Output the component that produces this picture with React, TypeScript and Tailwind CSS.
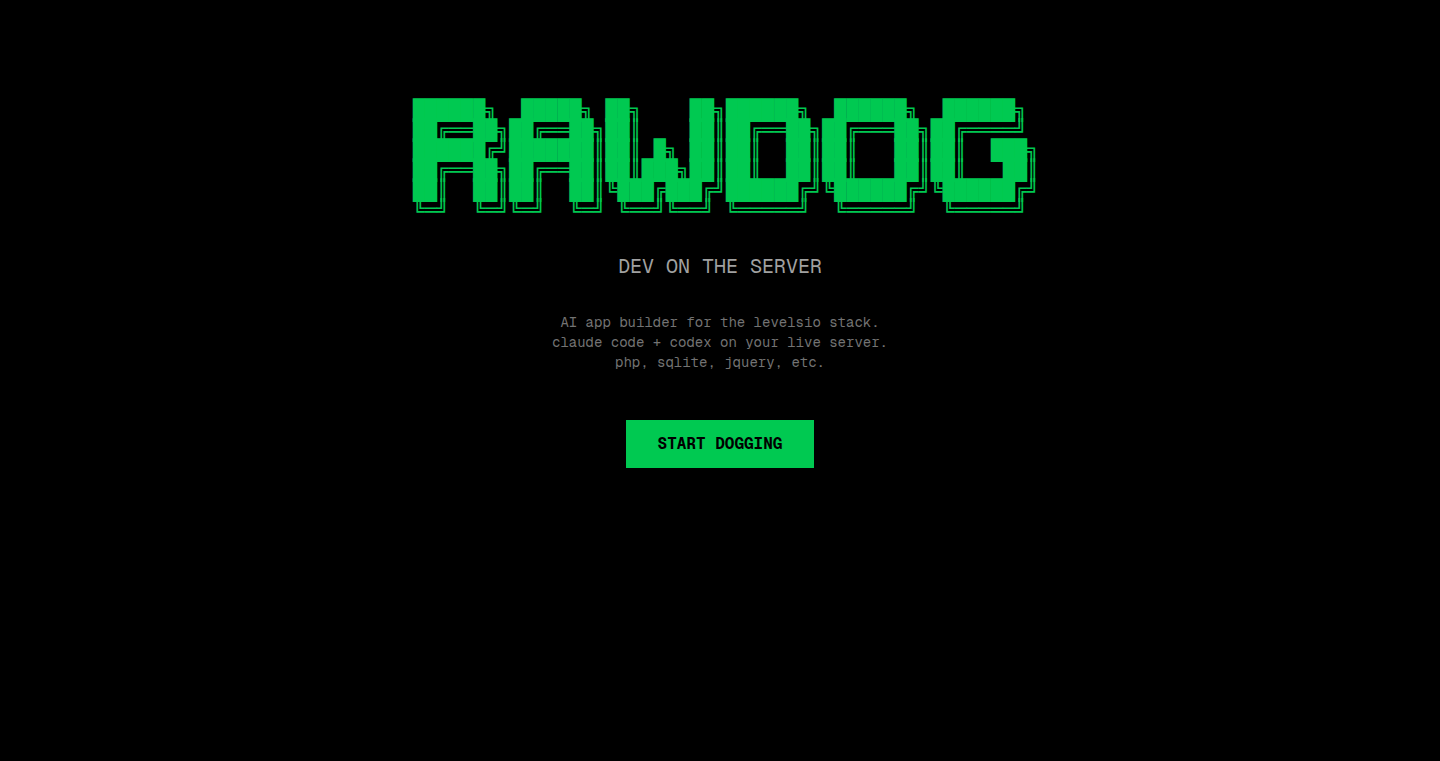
const banner = [
  '██████╗  █████╗ ██╗    ██╗██████╗  ██████╗  ██████╗ ',
  '██╔══██╗██╔══██╗██║    ██║██╔══██╗██╔═══██╗██╔════╝ ',
  '██████╔╝███████║██║ █╗ ██║██║  ██║██║   ██║██║  ███╗',
  '██╔══██╗██╔══██║██║███╗██║██║  ██║██║   ██║██║   ██║',
  '██║  ██║██║  ██║╚███╔███╔╝██████╔╝╚██████╔╝╚██████╔╝',
  '╚═╝  ╚═╝╚═╝  ╚═╝ ╚══╝╚══╝ ╚═════╝  ╚═════╝  ╚═════╝ ',
].join('\n');

export default function App() {
  return (
    <main className="flex min-h-screen flex-col items-center bg-black px-4 pt-25 text-center font-['Geist_Mono','DejaVu_Sans_Mono',monospace]">
      <pre
        aria-label="RAWDOG"
        className="pl-3 text-left font-['DejaVu_Sans_Mono',monospace] text-xl leading-5 text-green-500"
      >
        {banner}
      </pre>
      <h1 className="mt-8 text-xl text-neutral-400">DEV ON THE SERVER</h1>
      <p className="mt-8 text-sm text-neutral-500">
        AI app builder for the levelsio stack.
        <br />
        claude code + codex on your live server.
        <br />
        php, sqlite, jquery, etc.
      </p>
      <button type="button" className="mt-12 cursor-pointer bg-green-500 px-8 py-3 font-bold text-black">
        START DOGGING
      </button>
    </main>
  );
}
